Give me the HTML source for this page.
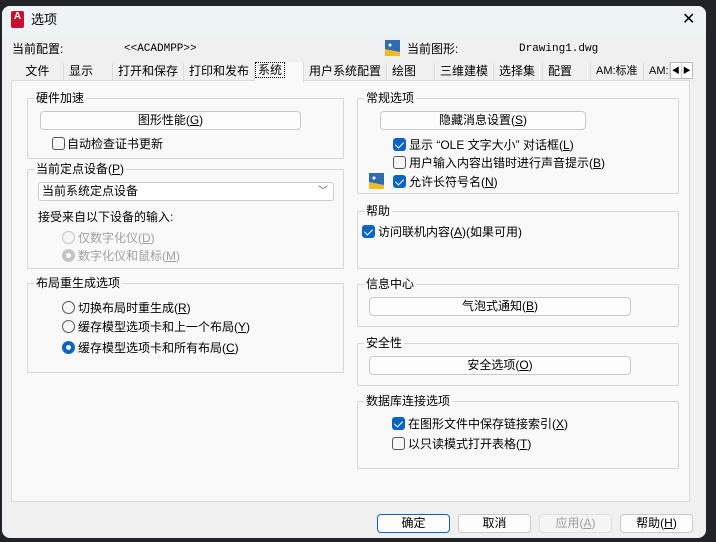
<!DOCTYPE html>
<html><head><meta charset="utf-8"><style>
*{box-sizing:border-box;margin:0;padding:0}
body{width:716px;height:542px;background:#202327;font-family:"Liberation Sans","Noto Sans CJK SC",sans-serif;font-size:12px;color:#000;position:relative;overflow:hidden}
.win{position:absolute;left:2px;top:6px;width:704px;height:532px;background:#f0f0f0;border-radius:8px;overflow:hidden}
.title{position:absolute;left:0;top:0;width:704px;height:31px;background:#eef3f6}
.a{position:absolute;white-space:nowrap;line-height:14px}
.panel{position:absolute;left:11px;top:80px;width:679px;height:422px;background:#f9f9f9;border:1px solid #dcdcdc}
.g{position:absolute;border:1px solid #d6d6d6;border-radius:2px}
.gl{position:absolute;top:-8px;left:6px;background:#f9f9f9;padding:0 2px;line-height:14px;font-size:12px}
.btn{position:absolute;height:19px;border:1px solid #c9c9c9;border-radius:4px;background:#fdfdfd;text-align:center;line-height:17px;font-size:12px}
.cb{position:absolute;width:13px;height:13px;border:1px solid #555;border-radius:3px;background:#f6f6f6}
.cb.on{background:#0a64c2;border-color:#0a64c2}
.cb.on:after{content:"";position:absolute;left:3px;top:1px;width:4px;height:7px;border:solid #fff;border-width:0 1.5px 1.5px 0;transform:rotate(45deg)}
.rd{position:absolute;width:13px;height:13px;border:1px solid #555;border-radius:50%;background:#f6f6f6}
.rd.on{background:#fff;border:4px solid #0a64c2}
.rd.dis{border-color:#c4c4c4}
.rd.dison{border:4px solid #c4c4c4;background:#fff}
.tab{position:absolute;top:57px;height:18px;line-height:16px;padding-left:5px;border-right:1px solid #dcdcdc;background:#f0f0f0}
.dis{color:#a0a0a0}
</style></head><body>
<div class="win">
<div class="title"></div>
<div style="position:absolute;left:9px;top:5px;width:13px;height:17px;background:#c8102e;border-radius:2px;color:#fff;font-weight:bold;font-size:10px;text-align:center;line-height:12px">A</div>
<div class="a" style="left:29px;top:7px;font-size:13px">选项</div>
<div class="a" style="left:680px;top:5px;font-size:16px;line-height:18px">✕</div>
<div class="a" style="left:10px;top:36px">当前配置:</div>
<div class="a" style="left:122px;top:36px;font-family:'Liberation Mono',monospace;font-size:11px">&lt;&lt;ACADMPP&gt;&gt;</div>
<svg style="position:absolute;left:383px;top:34px" width="15" height="16"><rect width="15" height="16" fill="#2e6db4"/><polygon points="0,9 15,12 15,16 0,16" fill="#f3b929"/><circle cx="5" cy="5" r="1.5" fill="#fff"/></svg>
<div class="a" style="left:405px;top:36px">当前图形:</div>
<div class="a" style="left:517px;top:36px;font-family:'Liberation Mono',monospace;font-size:11px">Drawing1.dwg</div>

<div class="tab" style="left:15px;width:47px">&nbsp;文件</div>
<div class="tab" style="left:62px;width:49px">显示</div>
<div class="tab" style="left:111px;width:71px">打开和保存</div>
<div class="tab" style="left:182px;width:71px">打印和发布</div>
<div class="tab" style="left:253px;width:49px;background:#f9f9f9;top:56px;height:20px;z-index:2;padding-left:0"><span style="border:1px dotted #000;padding:0 2px">系统</span></div>
<div class="tab" style="left:302px;width:83px">用户系统配置</div>
<div class="tab" style="left:385px;width:48px">绘图</div>
<div class="tab" style="left:433px;width:59px">三维建模</div>
<div class="tab" style="left:492px;width:49px">选择集</div>
<div class="tab" style="left:541px;width:48px">配置</div>
<div class="tab" style="left:589px;width:53px;font-size:11px">AM:标准</div>
<div class="tab" style="left:642px;width:26px;font-size:11px;overflow:hidden">AM:</div>
<div style="position:absolute;left:668px;top:56px;width:23px;height:17px;border:1px solid #bbb;background:#fff;font-size:8px;line-height:15px;display:flex"><span style="width:11px;text-align:center;border-right:1px solid #ccc">◀</span><span style="width:11px;text-align:center">▶</span></div>

<div class="panel" style="left:9px;top:74px"></div>
</div>

<!-- absolute page coordinates below -->
<div class="g" style="left:27px;top:98px;width:317px;height:61px"><div class="gl">硬件加速</div></div>
<div class="btn" style="left:40px;top:111px;width:261px">图形性能(<u>G</u>)</div>
<div class="cb" style="left:52px;top:137px"></div><div class="a" style="left:67px;top:137px">自动检查证书更新</div>

<div class="g" style="left:27px;top:169px;width:317px;height:100px"><div class="gl">当前定点设备(<u>P</u>)</div></div>
<div style="position:absolute;left:38px;top:182px;width:296px;height:19px;border:1px solid #ccc;border-radius:3px;background:#fff;line-height:17px;padding-left:3px">当前系统定点设备<span style="position:absolute;right:5px;top:0;font-size:10px;color:#555">﹀</span></div>
<div class="a" style="left:38px;top:210px">接受来自以下设备的输入:</div>
<div class="rd dis" style="left:62px;top:231px"></div><div class="a dis" style="left:78px;top:231px">仅数字化仪(<u>D</u>)</div>
<div class="rd dison" style="left:62px;top:249px"></div><div class="a dis" style="left:78px;top:249px">数字化仪和鼠标(<u>M</u>)</div>

<div class="g" style="left:27px;top:283px;width:317px;height:90px"><div class="gl">布局重生成选项</div></div>
<div class="rd" style="left:62px;top:301px"></div><div class="a" style="left:78px;top:301px">切换布局时重生成(<u>R</u>)</div>
<div class="rd" style="left:62px;top:320px"></div><div class="a" style="left:78px;top:320px">缓存模型选项卡和上一个布局(<u>Y</u>)</div>
<div class="rd on" style="left:62px;top:341px"></div><div class="a" style="left:78px;top:341px">缓存模型选项卡和所有布局(<u>C</u>)</div>

<div class="g" style="left:357px;top:98px;width:322px;height:96px"><div class="gl">常规选项</div></div>
<div class="btn" style="left:380px;top:111px;width:206px">隐藏消息设置(<u>S</u>)</div>
<div class="cb on" style="left:393px;top:138px"></div><div class="a" style="left:409px;top:138px">显示 “OLE 文字大小” 对话框(<u>L</u>)</div>
<div class="cb" style="left:393px;top:156px"></div><div class="a" style="left:409px;top:156px">用户输入内容出错时进行声音提示(<u>B</u>)</div>
<svg style="position:absolute;left:369px;top:173px" width="15" height="16"><rect width="15" height="16" fill="#2e6db4"/><polygon points="0,9 15,12 15,16 0,16" fill="#f3b929"/><circle cx="5" cy="5" r="1.5" fill="#fff"/></svg>
<div class="cb on" style="left:393px;top:175px"></div><div class="a" style="left:409px;top:175px">允许长符号名(<u>N</u>)</div>

<div class="g" style="left:357px;top:211px;width:322px;height:58px"><div class="gl">帮助</div></div>
<div class="cb on" style="left:362px;top:225px"></div><div class="a" style="left:378px;top:225px">访问联机内容(<u>A</u>)(如果可用)</div>

<div class="g" style="left:357px;top:284px;width:322px;height:43px"><div class="gl">信息中心</div></div>
<div class="btn" style="left:369px;top:297px;width:262px">气泡式通知(<u>B</u>)</div>

<div class="g" style="left:357px;top:343px;width:322px;height:43px"><div class="gl">安全性</div></div>
<div class="btn" style="left:369px;top:356px;width:262px">安全选项(<u>O</u>)</div>

<div class="g" style="left:357px;top:401px;width:322px;height:68px"><div class="gl">数据库连接选项</div></div>
<div class="cb on" style="left:392px;top:417px"></div><div class="a" style="left:408px;top:417px">在图形文件中保存链接索引(<u>X</u>)</div>
<div class="cb" style="left:392px;top:437px"></div><div class="a" style="left:408px;top:437px">以只读模式打开表格(<u>T</u>)</div>

<div class="btn" style="left:377px;top:514px;width:73px;border:1px solid #0a64c2">确定</div>
<div class="btn" style="left:458px;top:514px;width:73px">取消</div>
<div class="btn dis" style="left:539px;top:514px;width:73px;background:#f5f5f5;border-color:#e0e0e0">应用(<u>A</u>)</div>
<div class="btn" style="left:620px;top:514px;width:73px">帮助(<u>H</u>)</div>
</body></html>
